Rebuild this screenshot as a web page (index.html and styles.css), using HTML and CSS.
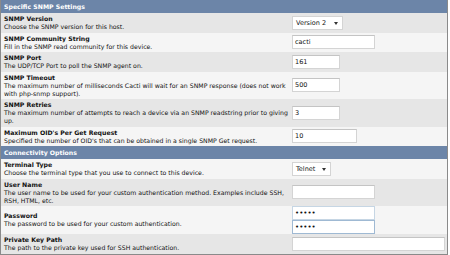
FILE: index.html
```html
<!DOCTYPE html>
<html>
<head>
  <title>Host settings</title>
  <link rel="stylesheet" href="styles.css">
</head>
<body>
<div class="settings">
  <div class="head">Specific SNMP Settings</div>

  <div class="row dark">
    <div class="desc"><b>SNMP Version</b><br>Choose the SNMP version for this host.</div>
    <div class="field"><span class="select ver">Version 2</span></div>
  </div>
  <div class="row light">
    <div class="desc"><b>SNMP Community String</b><br>Fill in the SNMP read community for this device.</div>
    <div class="field"><input class="box w83" type="text" value="cacti"></div>
  </div>
  <div class="row dark">
    <div class="desc"><b>SNMP Port</b><br>The UDP/TCP Port to poll the SNMP agent on.</div>
    <div class="field"><input class="box w48" type="text" value="161"></div>
  </div>
  <div class="row light">
    <div class="desc"><b>SNMP Timeout</b><br>The maximum number of milliseconds Cacti will wait for an SNMP response (does not work with php-snmp support).</div>
    <div class="field"><input class="box w48" type="text" value="500"></div>
  </div>
  <div class="row dark">
    <div class="desc"><b>SNMP Retries</b><br>The maximum number of attempts to reach a device via an SNMP readstring prior to giving up.</div>
    <div class="field"><input class="box w48" type="text" value="3"></div>
  </div>
  <div class="row light">
    <div class="desc"><b>Maximum OID's Per Get Request</b><br>Specified the number of OID's that can be obtained in a single SNMP Get request.</div>
    <div class="field"><input class="box w65" type="text" value="10"></div>
  </div>

  <div class="head">Connectivity Options</div>

  <div class="row light">
    <div class="desc"><b>Terminal Type</b><br>Choose the terminal type that you use to connect to this device.</div>
    <div class="field"><span class="select term">Telnet</span></div>
  </div>
  <div class="row dark">
    <div class="desc"><b>User Name</b><br>The user name to be used for your custom authentication method. Examples include SSH, RSH, HTML, etc.</div>
    <div class="field"><input class="box w83" type="text" value=""></div>
  </div>
  <div class="row light">
    <div class="desc"><b>Password</b><br>The password to be used for your custom authentication.</div>
    <div class="field">
      <input class="box w83 pw" type="password" value="abcde">
      <input class="box w83 pw focus" type="password" value="abcde">
    </div>
  </div>
  <div class="row dark">
    <div class="desc"><b>Private Key Path</b><br>The path to the private key used for SSH authentication.</div>
    <div class="field"><input class="box w153" type="text" value=""></div>
  </div>
</div>
</body>
</html>
```

FILE: styles.css
```css
body {
  margin: 0;
  background: #fff;
}

.settings {
  width: 446px;
  border: 1px solid #8a8a8a;
  border-top: none;
  font-family: "DejaVu Sans", Verdana, sans-serif;
  font-size: 6.2px;
  color: #111;
}

.head {
  height: 13px;
  line-height: 13px;
  padding-left: 3px;
  background-color: #6c85a8;
  color: #fff;
  font-weight: bold;
}

.row {
  display: flex;
  align-items: center;
}

.row.dark {
  background-color: #e6e6e6;
}

.row.light {
  background-color: #f5f5f5;
}

.desc {
  width: 286px;
  padding: 2px 2px 1.5px 3px;
  line-height: 8px;
}

.field {
  flex: 1;
  display: flex;
  flex-direction: column;
}

.box {
  height: 14px;
  box-sizing: border-box;
  margin: 0;
  padding: 0 2px;
  border: 1px solid #d4d4d4;
  border-top-color: #c4c4c4;
  background: #fff;
  font-family: "DejaVu Sans", Verdana, sans-serif;
  font-size: 6.5px;
  color: #111;
  outline: none;
}

.w48 { width: 48px; }
.w65 { width: 65px; }
.w83 { width: 83px; }
.w153 { width: 153px; }

.pw {
  font-size: 7px;
  border-color: #c6d6e4;
}

.pw.focus {
  border-color: #9fb9d3;
}

.select {
  display: inline-block;
  position: relative;
  box-sizing: border-box;
  height: 14px;
  line-height: 12px;
  padding-left: 3px;
  border: 1px solid #d4d4d4;
  background: #fff;
  font-size: 6.5px;
}

.select::after {
  content: "";
  position: absolute;
  right: 4px;
  top: 5px;
  border-left: 2px solid transparent;
  border-right: 2px solid transparent;
  border-top: 3px solid #333;
}

.ver { width: 51px; }
.term { width: 39px; }
```
